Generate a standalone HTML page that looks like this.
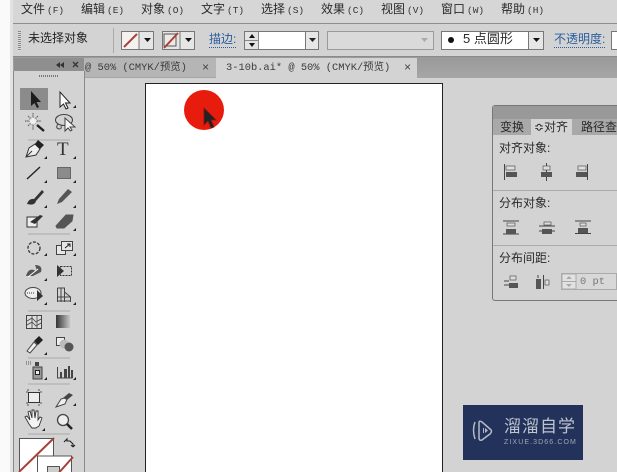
<!DOCTYPE html>
<html><head><meta charset="utf-8">
<style>
html,body{margin:0;padding:0;background:#d3d3d4;}
#p{position:relative;width:617px;height:472px;overflow:hidden;background:#d3d3d4;font-family:"Liberation Sans","Noto Sans CJK SC",sans-serif;color:#222;filter:blur(.35px);}
.a{position:absolute;}
.t{position:absolute;white-space:nowrap;font-size:12px;line-height:14px;color:#2a2a2a;}
.t b{font-family:"Liberation Mono",monospace;font-weight:normal;font-size:9.5px;margin-left:2px;color:#333;}
.m{font-family:"Liberation Mono","Noto Sans CJK SC",monospace;font-size:10.4px;color:#444;}
svg{position:absolute;left:0;top:0;}
</style></head><body><div id="p">
<div class="a" style="left:0;top:0;width:617px;height:23px;background:#d6d6d6"></div>
<div class="a" style="left:0;top:0;width:10px;height:472px;background:#fafafa"></div>
<div class="a" style="left:10px;top:0;width:3px;height:472px;background:#e2e2e2"></div>
<div class="t" style="left:21px;top:2px;">文件<b>(F)</b></div>
<div class="t" style="left:81px;top:2px;">编辑<b>(E)</b></div>
<div class="t" style="left:141px;top:2px;">对象<b>(O)</b></div>
<div class="t" style="left:201px;top:2px;">文字<b>(T)</b></div>
<div class="t" style="left:261px;top:2px;">选择<b>(S)</b></div>
<div class="t" style="left:321px;top:2px;">效果<b>(C)</b></div>
<div class="t" style="left:381px;top:2px;">视图<b>(V)</b></div>
<div class="t" style="left:441px;top:2px;">窗口<b>(W)</b></div>
<div class="t" style="left:501px;top:2px;">帮助<b>(H)</b></div>

<div class="a" style="left:13px;top:23px;width:604px;height:34px;background:#d3d3d4;border-top:1px solid #8f8f8f;border-bottom:1px solid #8a8a8a;box-sizing:border-box"></div>
<div class="a" style="left:18px;top:31px;width:3px;height:20px;background:repeating-linear-gradient(#888 0 1px,#ddd 1px 2px)"></div>
<div class="t" style="left:28px;top:31px;color:#222">未选择对象</div>
<div class="a" style="left:113px;top:28px;width:1px;height:25px;background:#aaa"></div>

<div class="a" style="left:121px;top:31px;width:33px;height:19px;background:#e6e6e6;border:1px solid #777;box-sizing:border-box"></div>
<div class="a" style="left:162px;top:31px;width:33px;height:19px;background:#e6e6e6;border:1px solid #777;box-sizing:border-box"></div>
<div class="t" style="left:209px;top:32px;color:#2a5d9c;border-bottom:1px dotted #2a5d9c;line-height:15px">描边:</div>
<div class="a" style="left:244px;top:31px;width:62px;height:19px;background:#fff;border:1px solid #777;box-sizing:border-box"></div>
<div class="a" style="left:245px;top:32px;width:14px;height:17px;background:#e4e4e4;border-right:1px solid #888;box-sizing:border-box"></div>
<div class="a" style="left:305px;top:31px;width:14px;height:19px;background:#e6e6e6;border:1px solid #777;box-sizing:border-box"></div>
<div class="a" style="left:327px;top:31px;width:107px;height:19px;background:#dadada;border:1px solid #9a9a9a;box-sizing:border-box"></div>
<div class="a" style="left:441px;top:31px;width:88px;height:19px;background:#fff;border:1px solid #777;box-sizing:border-box"></div>
<div class="a" style="left:529px;top:31px;width:15px;height:19px;background:#e6e6e6;border:1px solid #777;border-left:none;box-sizing:border-box"></div>
<div class="a" style="left:448px;top:37px;width:6px;height:6px;border-radius:50%;background:#111"></div>
<div class="t" style="left:463px;top:32px;font-size:13px;">5 点圆形</div>
<div class="t" style="left:554px;top:32px;color:#2a5d9c;border-bottom:1px dotted #2a5d9c;line-height:15px">不透明度:</div>
<div class="a" style="left:611px;top:31px;width:8px;height:19px;background:#fff;border:1px solid #777;box-sizing:border-box"></div>

<div class="a" style="left:13px;top:57px;width:604px;height:21px;background:linear-gradient(#9a9a9a,#a6a6a6)"></div>
<div class="a" style="left:84px;top:58px;width:132px;height:19px;background:#b5b5b5"></div>
<div class="a" style="left:216px;top:58px;width:201px;height:20px;background:#d3d3d4"></div>
<div class="t m" style="left:85px;top:61px;color:#3c3c3c">@ 50% (CMYK/预览)</div>
<div class="t m" style="left:202px;top:61px;font-size:12px;">×</div>
<div class="t m" style="left:226px;top:61px;color:#3c3c3c">3-10b.ai* @ 50% (CMYK/预览)</div>
<div class="t m" style="left:404px;top:61px;font-size:12px;">×</div>

<div class="a" style="left:14px;top:58px;width:70px;height:13px;background:#8f8f8f"></div>
<div class="a" style="left:13px;top:71px;width:72px;height:401px;background:#d3d3d4;border-right:1px solid #8a8a8a;border-left:1px solid #8a8a8a;box-sizing:border-box"></div>

<div class="a" style="left:145px;top:83px;width:298px;height:395px;background:#fff;border:1px solid #222;box-sizing:border-box"></div>
<div class="a" style="left:184px;top:90px;width:40px;height:40px;border-radius:50%;background:#e81c0c"></div>

<div class="a" style="left:492px;top:105px;width:130px;height:196px;background:#d3d3d4;border:1px solid #777;border-radius:3px;box-sizing:border-box"></div>
<div class="a" style="left:493px;top:106px;width:124px;height:13px;background:#999"></div>
<div class="a" style="left:493px;top:119px;width:124px;height:16px;background:#a9a9a9"></div>
<div class="a" style="left:531px;top:119px;width:41px;height:17px;background:#d3d3d4"></div>
<div class="t" style="left:500px;top:120px;">变换</div>
<div class="t" style="left:534px;top:120px;">≎对齐</div>
<div class="t" style="left:581px;top:120px;">路径查找器</div>
<div class="t" style="left:499px;top:141px;">对齐对象:</div>
<div class="t" style="left:499px;top:196px;">分布对象:</div>
<div class="t" style="left:499px;top:251px;">分布间距:</div>
<div class="a" style="left:493px;top:190px;width:124px;height:1px;background:#aaa"></div>
<div class="a" style="left:493px;top:245px;width:124px;height:1px;background:#aaa"></div>
<div class="a" style="left:561px;top:273px;width:56px;height:17px;background:#d8d8d8;border:1px solid #aaa;box-sizing:border-box"></div>
<div class="t m" style="left:580px;top:275px;color:#777">0 pt</div>

<div class="a" style="left:463px;top:405px;width:120px;height:55px;background:#22325a"></div>
<div class="t" style="left:504px;top:417px;font-size:17px;line-height:20px;color:#bfc4cf;letter-spacing:1px">溜溜自学</div>
<div class="t" style="left:504px;top:438px;font-size:7px;line-height:9px;color:#9ea5b5;letter-spacing:1.1px">ZIXUE.3D66.COM</div>

<svg width="617" height="472" viewBox="0 0 617 472" fill="none">
<!-- watermark play icon -->
<path d="M475 422q-3 8 0 17" stroke="#b5bac6" stroke-width="1.500"/>
<path d="M479 423v15q0 3 3 2l8-6q3-3 0-5l-8-7q-3-2-3 1z" stroke="#b5bac6" stroke-width="1.500"/>
<path d="M483 428v5h1v-5zM485 428v5l3-2.500z" fill="#b5bac6"/>
<!-- control bar -->
<rect x="122" y="32" width="17" height="17" fill="#f4f1ef"/>
<path d="M124 47L137 34" stroke="#a5413a" stroke-width="2"/>
<path d="M139 31v19" stroke="#777"/>
<path d="M144 38h7l-3.500 4z" fill="#111"/>
<rect x="164" y="34" width="12" height="12" fill="#efe9e6" stroke="#555"/>
<path d="M164 48L178 33" stroke="#a5413a" stroke-width="2"/>
<path d="M180 31v19" stroke="#777"/>
<path d="M185 38h7l-3.500 4z" fill="#111"/>
<path d="M249 38l3-4 3 4zM249 43l3 4 3-4z" fill="#111"/>
<path d="M245 40.500h14" stroke="#888"/>
<path d="M309 38h7l-3.500 4z" fill="#222"/>
<path d="M421 38h7l-3.500 4z" fill="#aaa"/>
<path d="M533 38h7l-3.500 4z" fill="#111"/>
<!-- tool panel header -->
<path d="M60 62l-4 3 4 3zM64 62l-4 3 4 3z" fill="#333"/>
<path d="M73 62l5 5M78 62l-5 5" stroke="#333" stroke-width="1.300"/>
<path d="M39 76h20" stroke="#777" stroke-dasharray="1 1" stroke-width="2"/>
<!-- tools -->
<rect x="20" y="88" width="28" height="22" fill="#8b8b8b"/>
<path d="M31 91v15l3.500-3 2.500 5 2-1-2.500-5h4.500z" fill="#1c1c1c"/>
<path d="M60 92v15l3.500-3 2.500 5 2-1-2.500-5h4.500z" fill="#fafafa" stroke="#222"/>
<path d="M76 108h-3l3-3z" fill="#222"/>
<!-- wand -->
<path d="M33 113v5M33 125v5M25 121h5M37 121h4M28 116l2.500 2.500M38 116l-2.500 2.500M28 126l2.500-2.500" stroke="#666" stroke-width="1.200" stroke-dasharray="1.500 .7"/>
<circle cx="33" cy="121" r="3.500" fill="#f0f0f0" stroke="#999" stroke-dasharray="1 1"/>
<path d="M37 125l7 6" stroke="#222" stroke-width="2.400"/>
<!-- lasso -->
<ellipse cx="64" cy="120" rx="8.500" ry="5.500" stroke="#444" stroke-width="1.100"/>
<path d="M58 124q-3 4 1 5 3 0 2-3" stroke="#444"/>
<path d="M65 118v13l3-3 2.500 3 1.500-1-2-3h5z" fill="#f6f6f6" stroke="#444"/>
<path d="M28 140h42" stroke="#aaa"/>
<!-- pen -->
<path d="M26 157l3-9 6-4 5 5-4 6z" fill="#eee" stroke="#333"/>
<path d="M35 144l3-4 6 5-4 4z" fill="#222"/>
<path d="M26 157l6-6" stroke="#333"/><path d="M47 159h-3l3-3z" fill="#222"/>
<text x="57" y="155" font-family="Liberation Serif,serif" font-size="19" fill="#333">T</text>
<path d="M76 159h-3l3-3z" fill="#222"/>
<path d="M27 179l13-12" stroke="#222" stroke-width="1.400"/><path d="M47 183h-3l3-3z" fill="#222"/>
<rect x="57.500" y="167.500" width="13" height="11" fill="#8b8b8b" stroke="#666"/><path d="M76 183h-3l3-3z" fill="#222"/>
<path d="M27 204q2-6 7-5l8-9 2 2-8 9q-1 5-9 3z" fill="#333"/><path d="M47 208h-3l3-3z" fill="#222"/>
<path d="M57 204l2-5 9-10 4 3-10 10z" fill="#555"/><path d="M76 208h-3l3-3z" fill="#222"/>
<path d="M27 217h10v10H27z" fill="#eee" stroke="#333"/>
<path d="M30 222l10-7 3 1-8 8z" fill="#333"/>
<path d="M56 226l10-11h7l-1 6-8 7h-7z" fill="#555" stroke="#555"/>
<path d="M76 231h-3l3-3z" fill="#222"/>
<path d="M28 234h42" stroke="#aaa"/>
<circle cx="34" cy="248" r="6" stroke="#333" stroke-dasharray="3 1.500" stroke-width="1.300"/>
<path d="M47 256h-3l3-3z" fill="#222"/>
<rect x="56.500" y="245.500" width="9" height="9" stroke="#444" fill="#e6e6e6"/>
<rect x="61.500" y="241.500" width="11" height="9" stroke="#444" fill="#e6e6e6"/>
<path d="M65 248l5-4M67 244h3v3" stroke="#222"/>
<path d="M76 256h-3l3-3z" fill="#222"/>
<path d="M26 276q2-8 8-6 4 2 1-5 8 0 6 7l-8 4-4 0z" fill="#555"/>
<path d="M28 277l10-8" stroke="#fff"/>
<path d="M47 281h-3l3-3z" fill="#222"/>
<path d="M57 265v12l7-6z" fill="#333"/>
<rect x="60.500" y="266.500" width="11" height="9" stroke="#333" stroke-dasharray="2 1"/>
<ellipse cx="33" cy="293" rx="8" ry="5.500" fill="#eee" stroke="#444"/>
<path d="M27 293h8" stroke="#333" stroke-dasharray="1 1"/>
<path d="M37 290v11l6-5z" fill="#333"/>
<path d="M47 305h-3l3-3z" fill="#222"/>
<path d="M57.500 288v14M57.500 288h7v14M61 288v14M64.500 292l6 5v5M57.500 297h13M57.500 301h13" stroke="#444"/>
<path d="M76 305h-3l3-3z" fill="#222"/>
<path d="M28 311h42" stroke="#aaa"/>
<rect x="26.500" y="315.500" width="15" height="13" fill="#ddd" stroke="#444"/>
<path d="M27 321l5-3 4 4 5-3M27 325l5-3 4 4 5-3M32 316v12M37 316v12" stroke="#444" stroke-width=".8"/>
<defs><linearGradient id="g"><stop offset="0" stop-color="#333"/><stop offset="1" stop-color="#ddd"/></linearGradient></defs>
<rect x="56" y="315" width="16" height="13" fill="url(#g)"/>
<path d="M27 351l7-9 3 3-7 8z" fill="#eee" stroke="#444"/>
<path d="M34 341l5-5 4 4-5 5z" fill="#222"/>
<path d="M47 355h-3l3-3z" fill="#222"/>
<rect x="56.500" y="337.500" width="8" height="8" fill="#eee" stroke="#444"/>
<circle cx="64" cy="344" r="4.500" fill="#bbb"/><circle cx="69" cy="347" r="4.500" fill="#555"/>
<path d="M28 358h42" stroke="#aaa"/>
<rect x="33" y="367" width="9" height="12" fill="#999" stroke="#444"/>
<rect x="35.500" y="370.500" width="4" height="4" fill="#eee" stroke="#222"/>
<path d="M35 362h4v4h-4z" fill="#444"/>
<path d="M26 364h6M26 362h5" stroke="#555" stroke-dasharray="1 1"/>
<path d="M47 380h-3l3-3z" fill="#222"/>
<path d="M57.500 367v11h15" stroke="#444"/>
<path d="M60 372h2v6h-2zM64 369h3v9h-3zM68 366h2v12h-2zM71 370h2v8h-2z" fill="#444"/>
<path d="M76 380h-3l3-3z" fill="#222"/>
<path d="M28 384h42" stroke="#aaa"/>
<rect x="28.500" y="392.500" width="11" height="10" fill="#eee" stroke="#333"/>
<path d="M26 392h2M26 403h2M40 392h2M40 403h2M28 389v2M39 389v2M28 404v2M39 404v2" stroke="#555"/>
<path d="M56 407l5-8 7-2-3 7z" fill="#eee" stroke="#444"/>
<path d="M63 398l6-5 4 2-6 5z" fill="#444"/>
<path d="M76 406h-3l3-3z" fill="#222"/>
<path d="M29 424l-4-7 2-1 3 4-2-8 2-1 2 7 0-8 2 0 1 8 1-7 2 0 0 9 2-3 2 1-3 8-3 2h-4z" fill="#f4f4f4" stroke="#333" stroke-width=".9"/>
<path d="M45 431h-3l3-3z" fill="#222"/>
<circle cx="63" cy="420" r="5.500" fill="#eee" stroke="#444" stroke-width="1.300"/>
<path d="M67 424l5 5" stroke="#222" stroke-width="2.500"/>
<path d="M28 434h42" stroke="#aaa"/>
<!-- fill / stroke -->
<rect x="19.500" y="438.500" width="34" height="40" fill="#fff" stroke="#555"/>
<path d="M19 472L54 438" stroke="#a5413a" stroke-width="2"/>
<rect x="37.500" y="456" width="34" height="30" fill="#fff" stroke="#555"/>
<rect x="47.500" y="466.500" width="12" height="12" fill="#ccc" stroke="#555"/>
<path d="M47 486L73 457" stroke="#a5413a" stroke-width="2"/>
<path d="M64 442l3-3v2h3l3 3v3M73 447l-2-2M73 447l2-2" stroke="#222" stroke-width="1.100"/>
<!-- cursor -->
<path d="M204 108v17l4-4 3 7 3-1-3-7h5z" fill="#222" stroke="#7a1a12" stroke-width=".8"/>
<!-- align icons -->
<g fill="#555">
<path d="M504.500 164v16" stroke="#444"/><rect x="506" y="166" width="9" height="4" fill="#ddd" stroke="#555" stroke-width=".7"/><rect x="506" y="172" width="11" height="5"/>
<path d="M546.500 163v18" stroke="#444"/><rect x="543" y="166" width="7" height="4" fill="#ddd" stroke="#555" stroke-width=".7"/><rect x="541" y="172" width="11" height="5"/>
<path d="M587.500 164v16" stroke="#444"/><rect x="578" y="166" width="8" height="4" fill="#ddd" stroke="#555" stroke-width=".7"/><rect x="576" y="172" width="11" height="5"/>
<path d="M503 221h16" stroke="#444"/><path d="M503 234h16" stroke="#444"/><rect x="507" y="223" width="8" height="3" fill="#ddd" stroke="#555" stroke-width=".7"/><rect x="506" y="229" width="10" height="5"/>
<path d="M539 226h16M539 231h16" stroke="#444"/><rect x="544" y="222" width="7" height="3" fill="#ddd" stroke="#555" stroke-width=".7"/><rect x="542" y="229" width="10" height="5"/>
<path d="M575 221h16M575 233.500h16" stroke="#444"/><rect x="580" y="223" width="6" height="3" fill="#ddd" stroke="#555" stroke-width=".7"/><rect x="578" y="228" width="10" height="5"/>
<path d="M504 281h5M504 285h5" stroke="#444"/><rect x="510" y="276" width="6" height="4" fill="#ddd" stroke="#555" stroke-width=".7"/><rect x="509" y="283" width="9" height="5"/>
<rect x="536" y="279" width="5" height="10"/><path d="M543.500 275v14M538 275v3" stroke="#444"/><rect x="545" y="280" width="4" height="5" fill="#ddd" stroke="#555" stroke-width=".7"/>
</g>
<rect x="562" y="274" width="14" height="15" fill="#e2e2e2" stroke="#aaa"/>
<path d="M562 281.500h14" stroke="#aaa"/>
<path d="M566 279l3-3 3 3zM566 284l3 3 3-3z" fill="#aaa"/>
</svg>
</div></body></html>
